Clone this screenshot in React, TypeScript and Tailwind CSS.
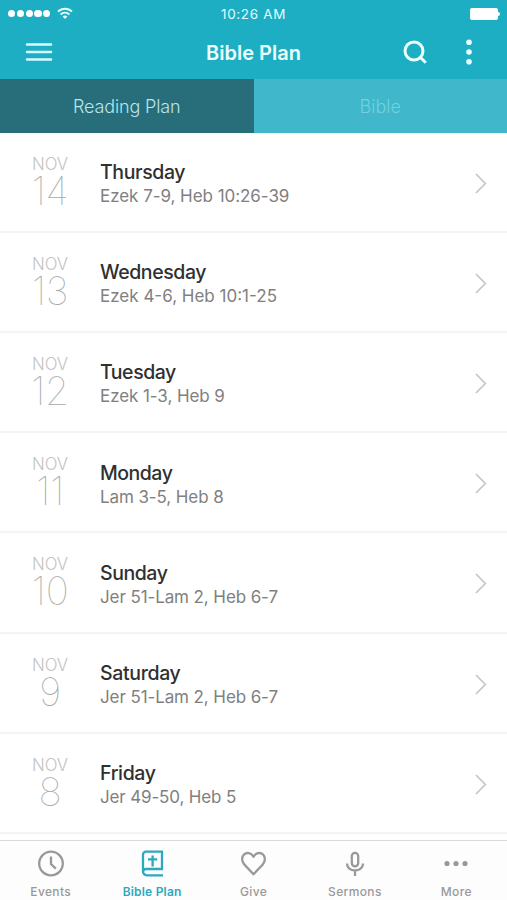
import type { ReactNode } from "react";

type Day = { date: string; day: string; passage: string; dayTracking: string; passageTracking: string };

const days: Day[] = [
  { date: "14", day: "Thursday", passage: "Ezek 7-9, Heb 10:26-39", dayTracking: "tracking-[-0.4px]", passageTracking: "tracking-[-0.05px]" },
  { date: "13", day: "Wednesday", passage: "Ezek 4-6, Heb 10:1-25", dayTracking: "tracking-[-0.42px]", passageTracking: "tracking-[0px]" },
  { date: "12", day: "Tuesday", passage: "Ezek 1-3, Heb 9", dayTracking: "tracking-[-0.45px]", passageTracking: "tracking-[-0.08px]" },
  { date: "11", day: "Monday", passage: "Lam 3-5, Heb 8", dayTracking: "tracking-[-0.5px]", passageTracking: "tracking-[-0.1px]" },
  { date: "10", day: "Sunday", passage: "Jer 51-Lam 2, Heb 6-7", dayTracking: "tracking-[-0.45px]", passageTracking: "tracking-[-0.1px]" },
  { date: "9", day: "Saturday", passage: "Jer 51-Lam 2, Heb 6-7", dayTracking: "tracking-[-0.35px]", passageTracking: "tracking-[-0.1px]" },
  { date: "8", day: "Friday", passage: "Jer 49-50, Heb 5", dayTracking: "tracking-[-0.35px]", passageTracking: "tracking-[-0.15px]" },
];

function StatusBar() {
  return (
    <div className="grid h-[27px] grid-cols-3 items-center">
      <div className="flex items-center pl-2">
        <div className="flex gap-[1.6px]">
          {[0, 1, 2, 3, 4].map((n) => (
            <span key={n} className="size-[7.2px] rounded-full bg-white" />
          ))}
        </div>
        <svg className="ml-[7px]" width="16" height="13" viewBox="0 0 16 13" fill="none" stroke="#e4ffff" strokeWidth="1.9">
          <path d="M1 4.6a10 10 0 0 1 14 0" />
          <path d="M3.6 7.5a6.2 6.2 0 0 1 8.8 0" />
          <path d="M8 12 5.6 9.6a3.4 3.4 0 0 1 4.8 0z" fill="#e4ffff" stroke="none" />
        </svg>
      </div>
      <div className="pt-px text-center text-[13.5px] tracking-[0.65px] text-[#e0fbff]">10:26 AM</div>
      <div className="flex items-center justify-end pr-[7px]">
        <span className="h-3 w-7 rounded-[2px] bg-white" />
        <span className="h-1 w-[2px] rounded-r-full bg-white" />
      </div>
    </div>
  );
}

function Header() {
  return (
    <header className="grid h-[52px] grid-cols-[1fr_auto_1fr] items-center">
      <svg className="mb-[2px] ml-[25px]" width="28" height="20" viewBox="0 0 28 20" stroke="#d5fcff" strokeWidth="2.6" strokeLinecap="round">
        <path d="M2 2.5h24M2 10h24M2 17.5h24" />
      </svg>
      <h1 className="text-[20px] font-semibold text-[#ecffff]">Bible Plan</h1>
      <div className="mb-[2px] flex items-center justify-end">
        <svg width="24" height="24" viewBox="0 0 24 24" fill="none" stroke="#eaffff" strokeWidth="3">
          <circle cx="11" cy="11" r="9" />
          <path d="m17.2 17.2 5.6 5.6" />
        </svg>
        <svg className="mr-[34.500px] ml-[37.500px]" width="8" height="26" viewBox="0 0 8 26" fill="#eaffff">
          <circle cx="4" cy="3.2" r="2.8" />
          <circle cx="4" cy="13" r="2.8" />
          <circle cx="4" cy="22.8" r="2.8" />
        </svg>
      </div>
    </header>
  );
}

function Row({ item }: { item: Day }) {
  return (
    <li className="flex h-[100.2px] items-start border-b-2 border-[#f4f4f4]">
      <div className="w-[100px] pt-[22px] text-center text-[#c4c4c4]">
        <div className="text-[16.8px] leading-[18px] font-light">NOV</div>
        <div className="text-[39px] leading-[36px] font-thin tracking-[-0.3px] text-[#a8a8a8]">{item.date}</div>
      </div>
      <div className="flex-1 pt-[27.3px]">
        <div className={"text-[19.5px] leading-[24px] font-medium text-[#303030] " + item.dayTracking}>{item.day}</div>
        <div className={"text-[17px] leading-[24px] text-[#808080] " + item.passageTracking}>{item.passage}</div>
      </div>
      <svg className="mt-[40px] mr-[19px]" width="14" height="21" viewBox="0 0 14 21" fill="none" stroke="#c6c6c6" strokeWidth="1.7">
        <path d="m2 1 9.3 9.5L2 20" />
      </svg>
    </li>
  );
}

function Tab({ label, active, children }: { label: string; active?: boolean; children: ReactNode }) {
  return (
    <div className={"flex flex-1 flex-col items-center pt-[8px] " + (active ? "font-semibold text-[#2ba9bd]" : "font-medium text-[#999]")}>
      <svg width="28" height="30" viewBox="0 0 28 30" fill="none" stroke="currentColor" strokeWidth="2.3">
        {children}
      </svg>
      <span className={"mt-[5px] text-[12px] leading-[16px] " + (active ? "tracking-[0.2px]" : "tracking-[0.35px]")}>{label}</span>
    </div>
  );
}

export default function App() {
  return (
    <div className="flex h-[900px] w-[507px] flex-col overflow-hidden bg-white font-[Inter,Roboto,sans-serif]">
      <div className="bg-[#1daec4]">
        <StatusBar />
        <Header />
        <div className="grid h-[53.7px] grid-cols-2 text-[18px] font-light">
          <div className="flex items-center justify-center bg-[#286e7a] pt-px tracking-[-0.14px] text-[#b9e5ec]">Reading Plan</div>
          <div className="flex items-center justify-center bg-[#40b7ca] pt-px text-[#73d2df]">Bible</div>
        </div>
      </div>
      <ul className="min-h-0 flex-1 overflow-hidden">
        {days.map((item) => (
          <Row key={item.date} item={item} />
        ))}
      </ul>
      <nav className="flex h-[60px] shrink-0 border-t border-[#d9d9d9] bg-[#fdfdfd]">
        <Tab label="Events">
          <circle cx="14" cy="14.5" r="11.8" />
          <path d="M14 7.5v7.5l4.8 4.6" />
        </Tab>
        <Tab label="Bible Plan" active>
          <path d="M25 2.7H8A3 3 0 0 0 5 5.7v16.8a3.8 3.8 0 0 0 3.8 3.8H25M5 22.5a3 3 0 0 1 3-2.5h16V2.7" />
          <path d="M14.6 6.5v11M10 10.3h9.2" />
        </Tab>
        <Tab label="Give">
          <path d="M13.5 25.3 4.2 15.4C1.3 12.2 1.6 7.5 4.1 5.3c2.9-2.4 7.3-1.4 9.4 2.4 2.1-3.8 6.5-4.8 9.4-2.4 2.5 2.2 2.8 6.9-.1 10.1Z" strokeLinejoin="round" />
        </Tab>
        <Tab label="Sermons">
          <rect x="10.8" y="3.8" width="6.4" height="13.5" rx="3.2" />
          <path d="M6 14.5c0 4.3 3.6 7 8 7s8-2.7 8-7M14 21.5v5.5" />
        </Tab>
        <Tab label="More">
          <g fill="currentColor" stroke="none">
            <circle cx="5" cy="14.5" r="2.6" />
            <circle cx="14" cy="14.5" r="2.6" />
            <circle cx="23" cy="14.5" r="2.6" />
          </g>
        </Tab>
      </nav>
    </div>
  );
}
